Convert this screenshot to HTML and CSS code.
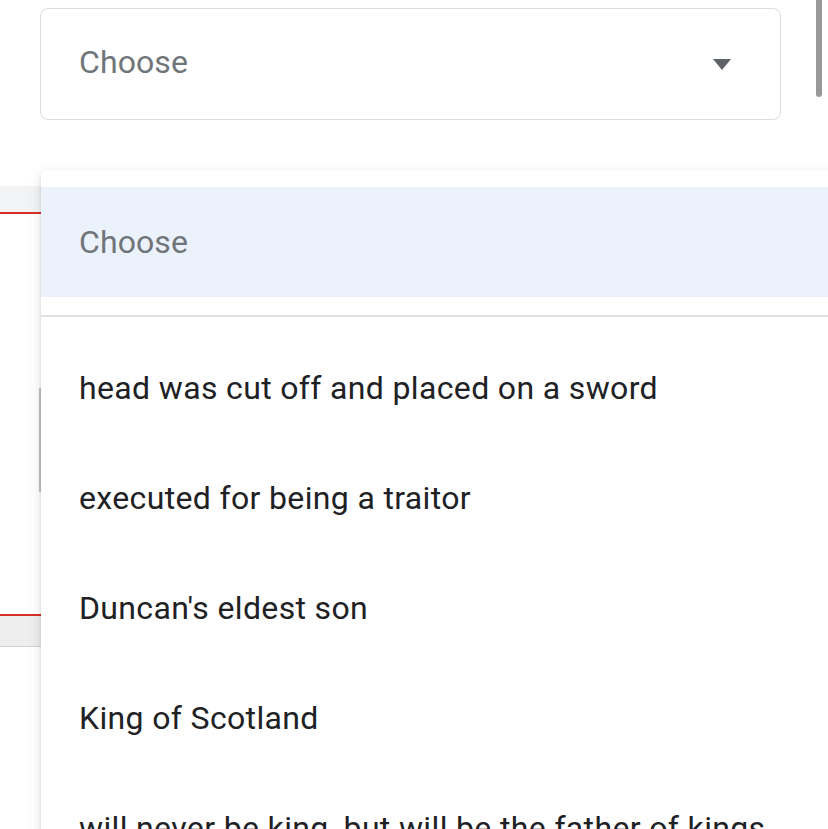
FILE: index.html
```html
<!DOCTYPE html>
<html>
<head>
<meta charset="utf-8">
<link rel="stylesheet" href="styles.css">
</head>
<body>
<div class="page">
  <div class="select">
    <span class="placeholder">Choose</span>
    <svg class="arrow" width="20" height="12" viewBox="0 0 20 12"><path d="M1 0 L19 0 L10 11 Z" fill="#5f6368"/></svg>
  </div>

  <div class="under">
    <div class="field field-a"></div>
    <div class="vline"></div>
    <div class="field field-b"></div>
  </div>

  <div class="menu">
    <div class="option selected">Choose</div>
    <div class="divider"></div>
    <div class="option">head was cut off and placed on a sword</div>
    <div class="option">executed for being a traitor</div>
    <div class="option">Duncan's eldest son</div>
    <div class="option">King of Scotland</div>
    <div class="option">will never be king, but will be the father of kings</div>
  </div>

  <div class="scrollbar"></div>
</div>
</body>
</html>
```

FILE: styles.css
```css
html, body {
  margin: 0;
  padding: 0;
  background: #ffffff;
  overflow: hidden;
}
.page {
  position: relative;
  width: 828px;
  height: 829px;
  overflow: hidden;
  font-family: Roboto, "Noto Sans", sans-serif;
}
.select {
  margin: 8px 0 0 40px;
  width: 741px;
  height: 112px;
  box-sizing: border-box;
  border: 1px solid #dadce0;
  border-radius: 8px;
  display: flex;
  align-items: center;
  justify-content: space-between;
  padding: 0 48px 0 38px;
}
.placeholder {
  font-size: 32px;
  color: #70757a;
  letter-spacing: 0.1px;
  margin-top: -4px;
}
.arrow {
  display: block;
  margin-top: 1px;
}
.under {
  position: absolute;
  left: 0;
  top: 0;
  width: 60px;
  height: 829px;
}
.field {
  position: absolute;
  left: 0;
  width: 60px;
}
.field-a {
  top: 186px;
  height: 26px;
  background: #f1f3f4;
  border-bottom: 2px solid #d93025;
}
.vline {
  position: absolute;
  left: 39px;
  top: 388px;
  width: 2px;
  height: 104px;
  background: #c4c4c4;
}
.field-b {
  top: 614px;
  height: 30px;
  background: #eeeeee;
  border-top: 2px solid #d93025;
  border-bottom: 1px solid #cfcfcf;
}
.menu {
  position: absolute;
  left: 41px;
  top: 170px;
  width: 820px;
  height: 700px;
  background: #ffffff;
  border-radius: 6px;
  box-shadow: 0 2px 4px rgba(0,0,0,0.12), 0 4px 14px rgba(0,0,0,0.1);
  padding-top: 17px;
}
.option {
  height: 110px;
  display: flex;
  align-items: center;
  padding-left: 38px;
  font-size: 32px;
  color: #202124;
  letter-spacing: 0.35px;
  white-space: nowrap;
}
.option.selected {
  background: #ebf2fc;
  color: #70757a;
  letter-spacing: 0.1px;
}
.divider {
  height: 2px;
  background: #e0e0e0;
  margin: 18px 0 16px;
}
.scrollbar {
  position: absolute;
  left: 816px;
  top: -6px;
  width: 6px;
  height: 103px;
  border-radius: 3px;
  background: #999999;
}
```
